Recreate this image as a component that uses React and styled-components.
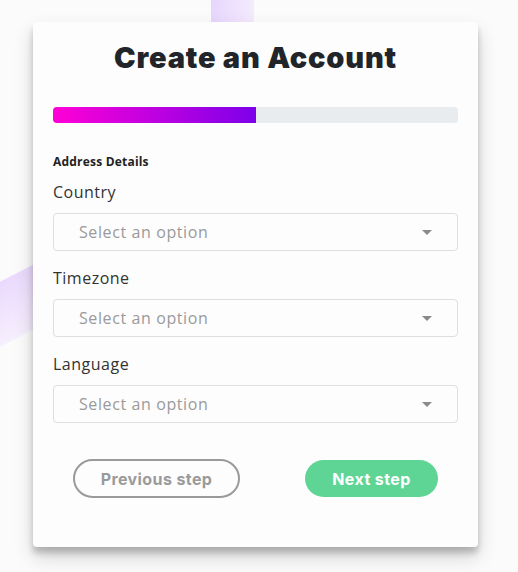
import React from 'react';
import styled, { createGlobalStyle } from 'styled-components';

const GlobalStyle = createGlobalStyle`
  html, body { margin: 0; padding: 0; }
  body {
    background: #fbfbfb;
    font-family: "Open Sans", "Liberation Sans", sans-serif;
    overflow: hidden;
  }
`;

const Page = styled.div`
  position: relative;
  width: 518px;
  height: 572px;
  padding: 22px 0 0 33px;
  box-sizing: border-box;
  overflow: hidden;
`;

const Stripe = styled.div`
  position: absolute;
  left: 211px;
  top: 0;
  width: 43px;
  height: 60px;
  background: linear-gradient(90deg, #e7d5fd, #f4ebfd);
`;

const Band = styled.div`
  position: absolute;
  left: -60px;
  top: 275px;
  width: 160px;
  height: 58px;
  transform: rotate(-27deg);
  transform-origin: center;
  background: linear-gradient(180deg, #ead9fd, #f6effd);
`;

const Card = styled.div`
  position: relative;
  width: 445px;
  height: 525px;
  box-sizing: border-box;
  padding: 16px 20px 0;
  background: #fdfdfd;
  border-radius: 4px;
  box-shadow: 0 10px 20px rgba(0, 0, 0, 0.16), 0 6px 6px rgba(0, 0, 0, 0.2);
  display: flex;
  flex-direction: column;
`;

const Title = styled.h1`
  margin: 0;
  text-align: center;
  font-family: Inter, "DejaVu Sans", sans-serif;
  font-weight: 900;
  font-size: 29px;
  letter-spacing: 0.8px;
  line-height: 40px;
  color: #212529;
`;

const Track = styled.div`
  margin-top: 29px;
  height: 16px;
  border-radius: 4px;
  background: #e9ecef;
  overflow: hidden;
`;

const Fill = styled.div`
  height: 100%;
  background: linear-gradient(90deg, #ff00d6, #7d00ea);
`;

const Section = styled.div`
  margin-top: 31px;
  font-size: 12px;
  font-weight: 700;
  letter-spacing: 0.2px;
  color: #222;
  line-height: 16px;
`;

const Field = styled.div`
  display: flex;
  flex-direction: column;
  margin-top: ${p => p.$first ? 11 : 16}px;
`;

const Label = styled.label`
  font-size: 16px;
  font-weight: 400;
  letter-spacing: 0.5px;
  color: #333;
  line-height: 22px;
  margin-bottom: 10px;
`;

const Select = styled.div`
  height: 38px;
  box-sizing: border-box;
  border: 1px solid #dedede;
  border-radius: 4px;
  display: flex;
  align-items: center;
  justify-content: space-between;
  padding: 0 25px;
  font-size: 16px;
  letter-spacing: 0.6px;
  color: #9a9a9a;
`;

const Caret = styled.span`
  width: 0;
  height: 0;
  border-left: 5px solid transparent;
  border-right: 5px solid transparent;
  border-top: 5px solid #8a8a8a;
`;

const Actions = styled.div`
  display: flex;
  justify-content: space-between;
  align-items: center;
  padding: 0 20px;
  margin-top: 36px;
`;

const Button = styled.button`
  font-family: Inter, "DejaVu Sans", sans-serif;
  font-weight: 700;
  font-size: 16px;
  letter-spacing: 0.4px;
  border-radius: 20px;
  height: ${p => p.$outline ? 39 : 37}px;
  width: ${p => p.$outline ? 167 : 133}px;
  box-sizing: border-box;
  border: ${p => p.$outline ? '2px solid #9a9a9a' : 'none'};
  background: ${p => p.$outline ? 'transparent' : '#5ed594'};
  color: ${p => p.$outline ? '#9a9a9a' : '#fff'};
  cursor: pointer;
`;

const fields = ['Country', 'Timezone', 'Language'];

export default function App() {
  return (
    <Page>
      <GlobalStyle />
      <Stripe />
      <Band />
      <Card>
        <Title>Create an Account</Title>
        <Track><Fill style={{ width: '50%' }} /></Track>
        <Section>Address Details</Section>
        {fields.map((f, i) => (
          <Field key={f} $first={i === 0}>
            <Label>{f}</Label>
            <Select>Select an option<Caret /></Select>
          </Field>
        ))}
        <Actions>
          <Button $outline>Previous step</Button>
          <Button>Next step</Button>
        </Actions>
      </Card>
    </Page>
  );
}
